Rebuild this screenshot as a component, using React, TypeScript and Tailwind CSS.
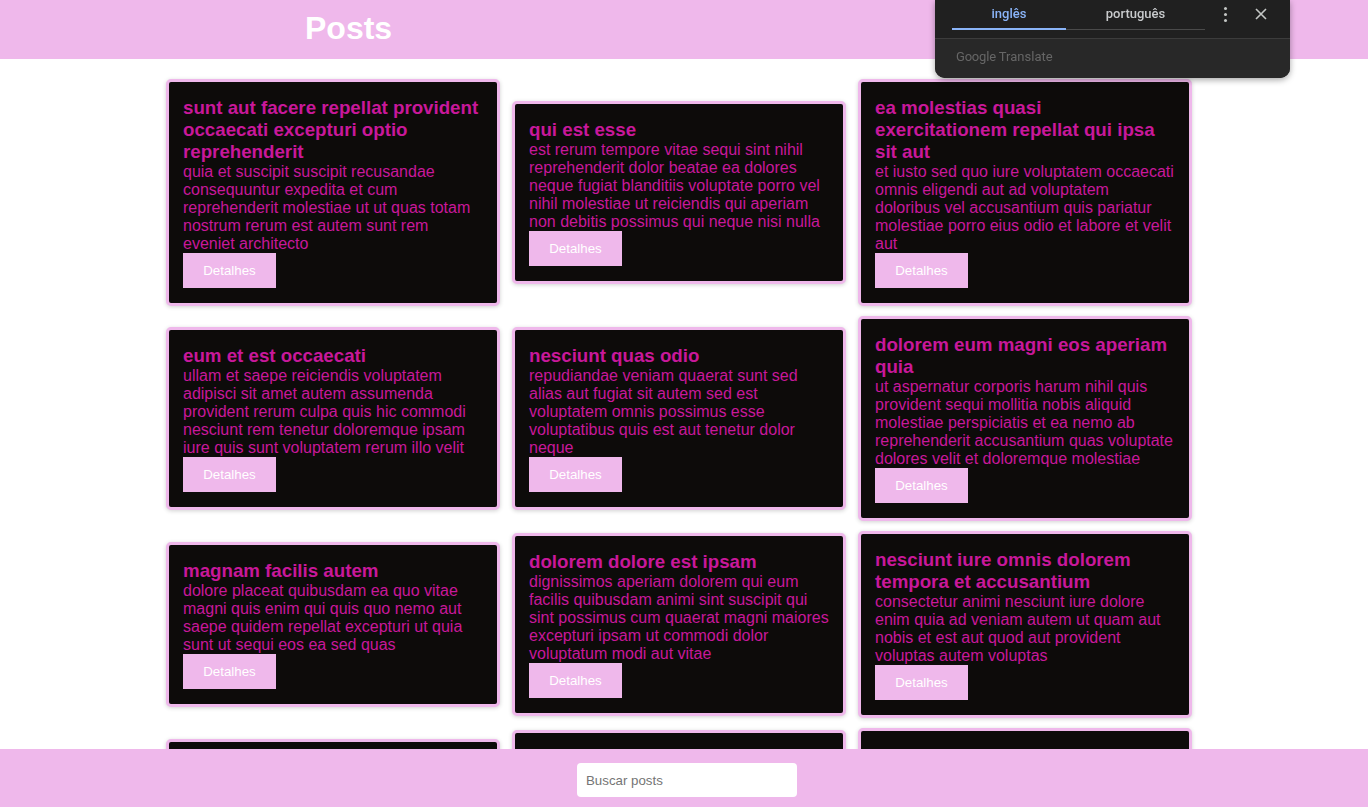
import React from "react";

type Post = { title: string; body: string };

const posts: Post[] = [
  {
    title: "sunt aut facere repellat provident occaecati excepturi optio reprehenderit",
    body: "quia et suscipit suscipit recusandae consequuntur expedita et cum reprehenderit molestiae ut ut quas totam nostrum rerum est autem sunt rem eveniet architecto",
  },
  {
    title: "qui est esse",
    body: "est rerum tempore vitae sequi sint nihil reprehenderit dolor beatae ea dolores neque fugiat blanditiis voluptate porro vel nihil molestiae ut reiciendis qui aperiam non debitis possimus qui neque nisi nulla",
  },
  {
    title: "ea molestias quasi exercitationem repellat qui ipsa sit aut",
    body: "et iusto sed quo iure voluptatem occaecati omnis eligendi aut ad voluptatem doloribus vel accusantium quis pariatur molestiae porro eius odio et labore et velit aut",
  },
  {
    title: "eum et est occaecati",
    body: "ullam et saepe reiciendis voluptatem adipisci sit amet autem assumenda provident rerum culpa quis hic commodi nesciunt rem tenetur doloremque ipsam iure quis sunt voluptatem rerum illo velit",
  },
  {
    title: "nesciunt quas odio",
    body: "repudiandae veniam quaerat sunt sed alias aut fugiat sit autem sed est voluptatem omnis possimus esse voluptatibus quis est aut tenetur dolor neque",
  },
  {
    title: "dolorem eum magni eos aperiam quia",
    body: "ut aspernatur corporis harum nihil quis provident sequi mollitia nobis aliquid molestiae perspiciatis et ea nemo ab reprehenderit accusantium quas voluptate dolores velit et doloremque molestiae",
  },
  {
    title: "magnam facilis autem",
    body: "dolore placeat quibusdam ea quo vitae magni quis enim qui quis quo nemo aut saepe quidem repellat excepturi ut quia sunt ut sequi eos ea sed quas",
  },
  {
    title: "dolorem dolore est ipsam",
    body: "dignissimos aperiam dolorem qui eum facilis quibusdam animi sint suscipit qui sint possimus cum quaerat magni maiores excepturi ipsam ut commodi dolor voluptatum modi aut vitae",
  },
  {
    title: "nesciunt iure omnis dolorem tempora et accusantium",
    body: "consectetur animi nesciunt iure dolore enim quia ad veniam autem ut quam aut nobis et est aut quod aut provident voluptas autem voluptas",
  },
  {
    title: "optio molestias id quia eum",
    body: "quo et expedita modi cum officia vel magni doloribus qui repudiandae vero nisi sit quos veniam quod sed accusamus veritatis error",
  },
  {
    title: "et ea vero quia laudantium autem",
    body: "delectus reiciendis molestiae occaecati non minima eveniet qui voluptatibus accusamus in eum beatae sit vel qui neque voluptates ut commodi qui incidunt ut animi commodi",
  },
  {
    title: "in quibusdam tempore odit est dolorem",
    body: "itaque id aut magnam praesentium quia et ea odit et ea voluptas et sapiente quia nihil amet occaecati quia id voluptatem incidunt ea est distinctio odio",
  },
];

function Card({ post }: { post: Post }) {
  return (
    <div className="rounded-[5px] border-[3px] border-[#efb8eb] bg-[#0d0b0a] px-[14px] pt-[15px] pb-[15px] shadow-[0_1px_4px_rgba(0,0,0,0.18)]">
      <h2 className="m-0 text-[18.72px] font-bold leading-[22px] text-[#c8189a]">{post.title}</h2>
      <p className="m-0 text-[16px] leading-[18px] text-[#c8189a]">{post.body}</p>
      <button className="h-[35px] w-[93px] bg-[#efb8eb] text-[13.3px] text-white">Detalhes</button>
    </div>
  );
}

export default function App() {
  return (
    <div className="min-h-screen bg-white" style={{ fontFamily: '"Liberation Sans", Arial, sans-serif' }}>
      <header className="flex h-[59px] items-start bg-[#efb8eb] pl-[305px] pt-[12px]">
        <h1 className="m-0 text-[32px] font-bold leading-[32px] text-white">Posts</h1>
      </header>

      <main className="ml-[166px] mt-[20px] grid w-[1026px] grid-cols-3 items-center gap-x-[12px] gap-y-[10px] pb-[80px]">
        {posts.map((p, i) => (
          <Card key={i} post={p} />
        ))}
      </main>

      <footer className="fixed bottom-0 left-0 right-0 flex h-[58px] items-start justify-center bg-[#efb8eb] pt-[14px]">
        <input
          placeholder="Buscar posts"
          className="ml-[6px] h-[34px] w-[220px] rounded-[4px] bg-white px-[9px] text-[13.3px] text-black outline-none placeholder:text-[#757575]"
          style={{ fontFamily: '"Liberation Sans", Arial, sans-serif' }}
        />
      </footer>

      {/* Google Translate popup */}
      <div
        className="fixed left-[935px] top-0 w-[355px] overflow-hidden rounded-b-[10px] bg-[#202020] shadow-[0_2px_6px_rgba(0,0,0,0.35)]"
        style={{ fontFamily: '"Roboto", "Liberation Sans", sans-serif' }}
      >
        <div className="flex h-[38px] items-start pl-[17px]">
          <div className="flex w-[253px]">
            <div className="flex h-[30px] w-[114px] items-center justify-center border-b-[2px] border-[#8ab4f8] text-[13px] font-medium text-[#8ab4f8]">
              inglês
            </div>
            <div className="flex h-[30px] w-[139px] items-center justify-center border-b border-[#4a4a4a] pb-[1px] text-[13px] font-medium text-[#c8cacc]">
              português
            </div>
          </div>
          <div className="flex h-[28px] flex-1 items-center">
            <div className="ml-[19px] flex flex-col items-center gap-[3px]">
              <span className="block h-[3px] w-[3px] rounded-full bg-[#c4c7c5]" />
              <span className="block h-[3px] w-[3px] rounded-full bg-[#c4c7c5]" />
              <span className="block h-[3px] w-[3px] rounded-full bg-[#c4c7c5]" />
            </div>
            <svg className="ml-[28px]" width="12" height="12" viewBox="0 0 12 12">
              <path d="M1 1 L11 11 M11 1 L1 11" stroke="#c4c7c5" strokeWidth="1.6" />
            </svg>
          </div>
        </div>
        <div className="flex h-[40px] items-center border-t border-[#3c3c3c] bg-[#282828] px-[21px] pb-[3px] text-[13px] text-[#666]">
          <span className="tracking-[-0.2px]">Google</span>
          <span className="ml-[3px]">Translate</span>
        </div>
      </div>
    </div>
  );
}
